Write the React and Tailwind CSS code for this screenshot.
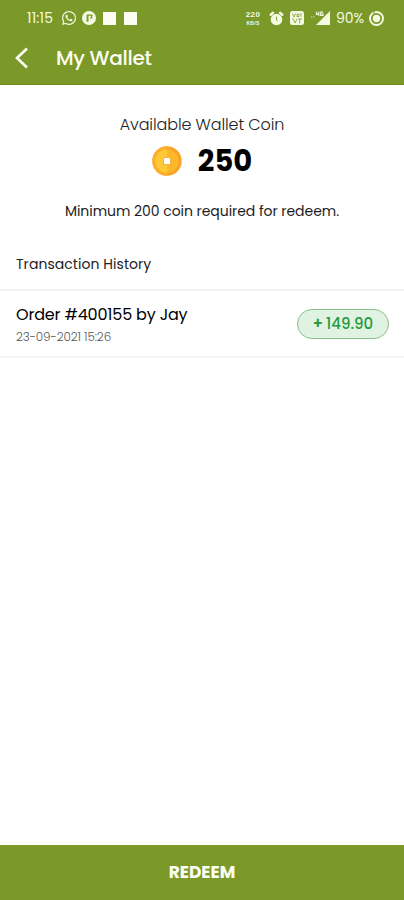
import React, { useState } from 'react';
import { FaWhatsapp } from 'react-icons/fa';

const StatusBar = () => {
  return (
    <div className="flex h-9 items-center pl-[27px] pr-[20px] text-[#f4f9e2]">
      <span className="w-[34px] text-[14px] tracking-[0.2px]">11:15</span>
      <FaWhatsapp className="h-[16px] w-[16px]" />
      <svg className="ml-[5px] h-[14px] w-[14px]" viewBox="0 0 14 14">
        <circle cx="7" cy="7" r="7" fill="currentColor" />
        <path d="M4.6 10.8V3.6h1.9v7.2z" fill="#7b9929" />
        <path d="M6 4.2h4.6M9.6 3.6v3.2H8.2" fill="none" stroke="#7b9929" strokeWidth="1.3" />
      </svg>
      <span className="ml-[7px] h-[13px] w-[13px] bg-[#fbfdf3]"></span>
      <span className="ml-2 h-[13px] w-[13px] bg-[#fbfdf3]"></span>

      <div className="ml-auto flex items-center">
        <div className="flex w-4 flex-col items-center font-['Liberation_Sans',sans-serif] font-bold">
          <span className="h-[10px] text-[8px] leading-[10px] tracking-[0.4px]">220</span>
          <span className="h-[6px] text-[5px] leading-[6px] tracking-[0.3px]">KB/S</span>
        </div>
        {/* alarm */}
        <svg className="ml-[8px] h-[15px] w-[15px]" viewBox="0 0 15 15">
          <circle cx="7.5" cy="8.5" r="5.8" fill="currentColor" />
          <path d="M1.7 3.7 4 1.8M13.3 3.7 11 1.8" stroke="currentColor" strokeWidth="2.4" strokeLinecap="round" />
          <path d="M7.5 5.8v3l.8 1.1" stroke="#7b9929" strokeWidth="1" fill="none" />
        </svg>
        {/* volte */}
        <svg className="ml-[6px] h-[14px] w-[14px]" viewBox="0 0 14 14">
          <rect width="14" height="14" rx="2.5" fill="currentColor" />
          <path d="M2.5 2.5 4 6l1.5-3.5M7 3.2h2v2.4H7zM11 2v3.6M2.5 7l2.5 5 2-4M8 8h4M9.7 8v4.3" stroke="#7b9929" strokeWidth="0.8" fill="none" />
        </svg>
        {/* signal */}
        <svg className="ml-[7px] h-[14px] w-[19px]" viewBox="0 0 19 14">
          <path d="M19 0v14H5z" fill="currentColor" />
          <path d="M0 6h1.3M2.2 6h1.3" stroke="currentColor" strokeWidth="2" opacity="0.4" />
          <path d="M5.5.8v2.5h2.8M7.8.8v4M12 1.2H9.7v3.2H12V3h-1" stroke="currentColor" strokeWidth="1.2" fill="none" />
        </svg>
        <span className="ml-[6px] w-[28px] text-[14px]">90%</span>
        {/* battery */}
        <svg className="ml-[5px] h-[15px] w-[15px]" viewBox="0 0 15 15">
          <circle cx="7.5" cy="7.5" r="6.5" fill="none" stroke="currentColor" strokeWidth="2" />
          <circle cx="7.5" cy="7.5" r="3.7" fill="currentColor" />
          <path d="M5 0v3.4" stroke="#7b9929" strokeWidth="1" fill="none" />
        </svg>
      </div>
    </div>
  );
};

const Header = ({ title }) => {
  return (
    <header className="h-[85px] shrink-0 border-b border-[#6e8d1a] bg-[#7b9929]">
      <StatusBar />
      <div className="flex h-[44px] items-center pl-[15px]">
        <button aria-label="Back">
          <svg className="h-[22px] w-[14px]" viewBox="0 0 14 22" fill="none">
            <path d="M12 1.5 2 11l10 9.5" stroke="#fbfdf3" strokeWidth="2.7" />
          </svg>
        </button>
        <h1 className="ml-[27px] text-[20px] font-medium tracking-[-0.3px] text-[#fbfdf3]">{title}</h1>
      </div>
    </header>
  );
};

const Coin = () => {
  return (
    <svg className="h-[30px] w-[30px]" viewBox="0 0 30 30">
      <circle cx="15" cy="15" r="14.7" fill="#f9a32a" />
      <path d="M15 .3a14.7 14.7 0 0 0 0 29.4z" fill="#fdad2d" />
      <circle cx="15" cy="15" r="11.6" fill="#fdb829" />
      <path d="M15 3.4a11.6 11.6 0 0 0 0 23.2z" fill="#fec936" />
      <rect x="11" y="11" width="8" height="8" rx="1.5" fill="#fab04a" />
      <rect x="12" y="12" width="6" height="6" rx="1" fill="#fff" />
    </svg>
  );
};

const Transaction = ({ item }) => {
  return (
    <li className="flex h-[67px] items-center justify-between border-b-2 border-[#f3f3f3] pl-4 pr-[15px]">
      <div className="pt-[3px]">
        <p className="text-[16px] leading-[22px] tracking-[-0.18px] text-black">
          Order #{item.orderId} by {item.name}
        </p>
        <p className="mt-px text-[12px] font-light leading-[20px] tracking-[-0.1px] text-[#555]">{item.date}</p>
      </div>
      <span className="flex h-[30px] w-[92px] items-center justify-center gap-[3px] rounded-full border border-[#86c08b] bg-[#e0f3e2] pt-[2px] text-[15px] font-medium text-[#259b3c]">
        <span className="font-semibold">+</span>
        <span>{item.amount}</span>
      </span>
    </li>
  );
};

const App = () => {
  const [coins] = useState(250);
  const [transactions] = useState([
    { orderId: '400155', name: 'Jay', date: '23-09-2021 15:26', amount: '149.90' },
  ]);

  return (
    <div className="flex h-[900px] w-[404px] flex-col overflow-hidden bg-white font-['Poppins',Inter,sans-serif]">
      <Header title="My Wallet" />
      <main className="flex-1">
        <section className="flex flex-col items-center pt-[29px]">
          <p className="text-[16px] font-light leading-[22px] tracking-[-0.1px] text-[#222]">Available Wallet Coin</p>
          <div className="mt-[7px] flex items-center gap-4">
            <Coin />
            <span className="text-[29px] font-bold leading-9 text-black">{coins}</span>
          </div>
          <p className="mt-[22px] text-[14px] leading-5 tracking-[-0.05px] text-[#1c1c1c]">
            Minimum 200 coin required for redeem.
          </p>
        </section>
        <h2 className="mt-[33px] px-4 text-[14px] leading-5 tracking-[0.05px] text-[#222]">Transaction History</h2>
        <ul className="mt-[15px] border-t-2 border-[#f3f3f3]">
          {transactions.map((item) => (
            <Transaction key={item.orderId} item={item} />
          ))}
        </ul>
      </main>
      <button className="h-[55px] shrink-0 bg-[#7b9929] text-[17px] font-bold text-[#fbfdf3]">REDEEM</button>
    </div>
  );
};

export default App;
